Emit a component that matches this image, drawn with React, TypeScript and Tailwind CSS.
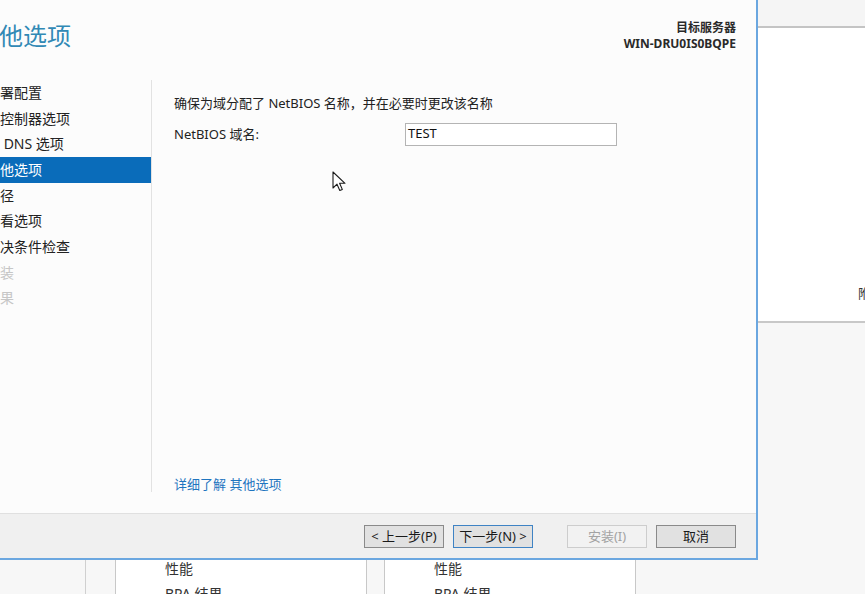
import React from "react"

const FONT = "font-['Noto_Sans','Noto_Sans_CJK_SC',sans-serif]"

const navItems = [
  { label: "署配置", state: "normal" },
  { label: "控制器选项", state: "normal" },
  { label: "\u00a0DNS 选项", state: "normal" },
  { label: "他选项", state: "active" },
  { label: "径", state: "normal" },
  { label: "看选项", state: "normal" },
  { label: "决条件检查", state: "normal" },
  { label: "装", state: "disabled" },
  { label: "果", state: "disabled" },
]

function WizardButton({
  children,
  variant = "normal",
  className = "",
}: {
  children: React.ReactNode
  variant?: "normal" | "focused" | "disabled"
  className?: string
}) {
  const styles = {
    normal: "bg-[#e1e1e1] border-[#8a8a8a] text-[#1a1a1a]",
    focused: "bg-[#e1e1e1] border-[#3f83c4] text-[#1a1a1a]",
    disabled: "bg-[#f2f2f2] border-[#cdcdcd] text-[#a3a3a3]",
  }[variant]
  return (
    <div
      className={`h-[23px] w-[80px] border flex items-center justify-center text-[13px] leading-none ${styles} ${className}`}
    >
      {children}
    </div>
  )
}

function Cursor() {
  return (
    <svg
      className="absolute left-[332px] top-[171px]"
      width="15"
      height="22"
      viewBox="0 0 15 22"
    >
      <path
        d="M1 1 L1 17 L5 13.2 L7.8 19.5 L10.3 18.4 L7.6 12.3 L13 12.3 Z"
        fill="#ffffff"
        stroke="#1a1a1a"
        strokeWidth="1.1"
        strokeLinejoin="round"
      />
    </svg>
  )
}

function Dialog() {
  return (
    <div className="w-[758px] h-[560px] shrink-0 flex flex-col bg-[#fcfcfc] border-r-2 border-b-2 border-[#6ba7e0] relative">
      {/* Header */}
      <div className="h-[80px] shrink-0 flex justify-between pr-[20px]">
        <div className="pt-[20px] text-[24px] leading-[32px] text-[#3189b5] -ml-[1px]">他选项</div>
        <div className="pt-[20px] text-right text-[12px] leading-[16px] font-semibold text-[#2a2a2a]">
          <div>目标服务器</div>
          <div className="font-bold">WIN-DRU0IS0BQPE</div>
        </div>
      </div>

      {/* Body */}
      <div className="flex-1 flex min-h-0">
        <div className="w-[152px] shrink-0 h-[412px] border-r border-[#e2e2e2] flex flex-col">
          {navItems.map((item) => (
            <div
              key={item.label}
              className={`h-[25.7px] flex items-center text-[14px] leading-none pr-1 ${
                item.state === "active"
                  ? "bg-[#0a6cba] text-white"
                  : item.state === "disabled"
                  ? "text-[#c6c6c6]"
                  : "text-[#222222]"
              }`}
            >
              {item.label}
            </div>
          ))}
        </div>

        <div className="flex-1 flex flex-col pl-[22px] pt-[13px] text-[13px] text-[#222222]">
          <div className="leading-[20px]">确保为域分配了 NetBIOS 名称，并在必要时更改该名称</div>
          <div className="flex items-center mt-[10px] h-[22px]">
            <div className="w-[231px] leading-[20px]">NetBIOS 域名:</div>
            <div className="w-[212px] h-[23px] border border-[#b4b4b4] bg-white flex items-center pl-[2px] text-[13px] text-[#111111]">
              TEST
            </div>
          </div>
          <div className="mt-auto pb-[19px] leading-[20px] text-[#1f75bf]">详细了解 其他选项</div>
        </div>
      </div>

      {/* Footer */}
      <div className="h-[45px] shrink-0 border-t border-[#e0e0e0] bg-[#f0f0f0] flex items-center justify-end pr-[20px] pt-[1px]">
        <WizardButton>&lt; 上一步(P)</WizardButton>
        <WizardButton variant="focused" className="ml-[9px]">
          下一步(N) &gt;
        </WizardButton>
        <WizardButton variant="disabled" className="ml-[34px]">
          安装(I)
        </WizardButton>
        <WizardButton className="ml-[9px]">取消</WizardButton>
      </div>

      <Cursor />
    </div>
  )
}

export default function App() {
  return (
    <div className={`w-[865px] h-[594px] overflow-hidden bg-[#f7f7f7] flex flex-col ${FONT}`}>
      <div className="flex h-[560px] shrink-0">
        <Dialog />
        {/* Server manager behind the dialog */}
        <div className="flex-1 flex flex-col">
          <div className="h-[28px] bg-[#f5f5f5] border-b-2 border-[#c4c4c4]" />
          <div className="h-[295px] bg-white border-b-2 border-[#c8c8c8] overflow-hidden relative">
            <div className="absolute left-[100px] top-[257px] text-[13px] leading-[16px] text-[#333333]">附</div>
          </div>
          <div className="flex-1 bg-[#f7f7f7]" />
        </div>
      </div>

      <div className="flex-1 flex">
        <div className="w-[85px] shrink-0" />
        <div className="w-[30px] shrink-0 border-l border-[#d0d0d0]" />
        <div className="w-[252px] shrink-0 bg-white border-x border-[#c8c8c8] pl-[49px] text-[14px] leading-[18px] text-[#333333]">
          <div className="pt-[0px]">性能</div>
          <div className="mt-[7px]">BPA 结果</div>
        </div>
        <div className="w-[17px] shrink-0" />
        <div className="w-[252px] shrink-0 bg-white border-x border-[#c8c8c8] pl-[49px] text-[14px] leading-[18px] text-[#333333]">
          <div className="pt-[0px]">性能</div>
          <div className="mt-[7px]">BPA 结果</div>
        </div>
        <div className="flex-1" />
      </div>
    </div>
  )
}
